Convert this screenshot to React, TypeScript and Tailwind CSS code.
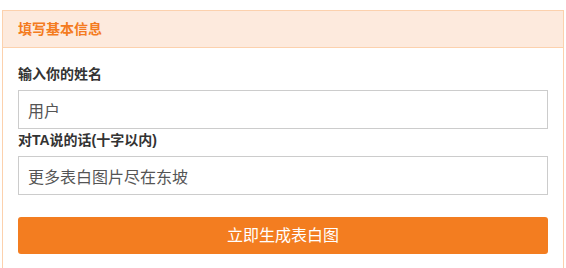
import React from "react";

export default function App() {
  const font = { fontFamily: '"Liberation Sans", "Noto Sans CJK SC", sans-serif' };
  return (
    <div className="w-[566px] h-[268px] bg-white overflow-hidden" style={font}>
      <div className="mt-[10px] ml-[2px] w-[562px] border border-b-0 border-[#fcd1ad] h-[300px]">
        <div className="h-[37px] bg-[#fdeadd] border-b border-[#fcd1ad] pl-[15px] flex items-center text-[14px] font-bold text-[#f47b20]">
          填写基本信息
        </div>
        <div className="pl-[15px] pt-[16px]">
          <div className="h-[20px] leading-[20px] text-[14px] font-bold text-[#333]">输入你的姓名</div>
          <input
            readOnly
            defaultValue="用户"
            className="mt-[6px] block w-[530px] h-[39px] border border-[#cccccc] px-[9px] text-[16px] text-[#555] outline-none"
            style={font}
          />
          <div className="mt-[1px] h-[20px] leading-[20px] text-[14px] font-bold text-[#333]">对TA说的话(十字以内)</div>
          <input
            readOnly
            defaultValue="更多表白图片尽在东坡"
            className="mt-[6px] block w-[530px] h-[39px] border border-[#cccccc] px-[9px] text-[16px] text-[#555] outline-none"
            style={font}
          />
          <button
            className="mt-[22px] block w-[530px] h-[37px] rounded-[3px] bg-[#f37d20] text-white text-[16px]"
            style={font}
          >
            立即生成表白图
          </button>
        </div>
      </div>
    </div>
  );
}
